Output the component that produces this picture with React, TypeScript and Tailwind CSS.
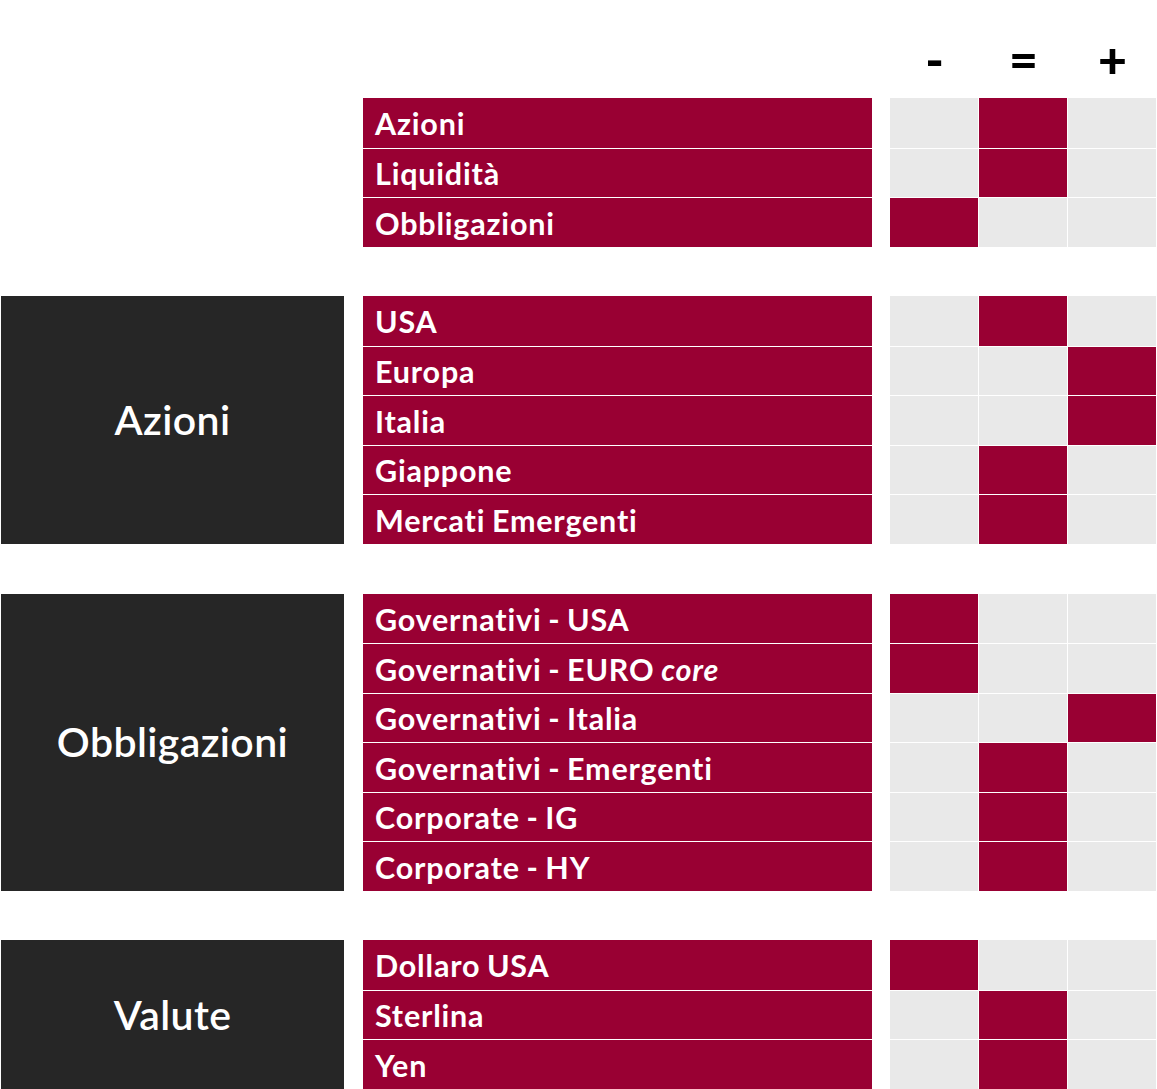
import React from 'react'

type Level = 0|1|2
type Row = {label:React.ReactNode;level:Level}
type Section = {title?:string;rows:Row[]}

const SECTIONS:Section[]=[
  {rows:[
    {label:'Azioni',level:1},
    {label:'Liquidità',level:1},
    {label:'Obbligazioni',level:0},
  ]},
  {title:'Azioni',rows:[
    {label:'USA',level:1},
    {label:'Europa',level:2},
    {label:'Italia',level:2},
    {label:'Giappone',level:1},
    {label:'Mercati Emergenti',level:1},
  ]},
  {title:'Obbligazioni',rows:[
    {label:'Governativi - USA',level:0},
    {label:<>Governativi - EURO <i>core</i></>,level:0},
    {label:'Governativi - Italia',level:2},
    {label:'Governativi - Emergenti',level:1},
    {label:'Corporate - IG',level:1},
    {label:'Corporate - HY',level:1},
  ]},
  {title:'Valute',rows:[
    {label:'Dollaro USA',level:0},
    {label:'Sterlina',level:1},
    {label:'Yen',level:1},
  ]},
]

function SectionBlock({s}:{s:Section}){
  return(
    <div className="flex">
      <div className="w-[344px] pl-px shrink-0">
        {s.title&&(
          <div className="h-full bg-[#262626] flex items-center justify-center text-white text-[41px] font-semibold tracking-[0.4px]">
            {s.title}
          </div>
        )}
      </div>
      <div className="w-[509px] ml-[19px] shrink-0 flex flex-col">
        {s.rows.map((r,i)=>(
          <div key={i} className={`h-[49.5px] bg-[#990033] text-white text-[30.5px] font-bold tracking-[0.8px] [word-spacing:-1.5px] flex items-center pl-3 ${i>0?'border-t border-white':''}`}>
            <span className="leading-none pt-[1px]">{r.label}</span>
          </div>
        ))}
      </div>
      <div className="ml-[18px] w-[266px] shrink-0 flex flex-col">
        {s.rows.map((r,i)=>(
          <div key={i} className={`h-[49.5px] flex gap-px ${i>0?'border-t border-white':''}`}>
            {[0,1,2].map(c=>(
              <div key={c} className={`w-[88px] ${c===r.level?'bg-[#990033]':'bg-[#e9e9e9]'}`}/>
            ))}
          </div>
        ))}
      </div>
    </div>
  )
}

export default function App(){
  return(
    <div className="w-[1157px] h-[1089px] bg-white overflow-hidden [font-variant-ligatures:none]" style={{fontFamily:'Lato, "Liberation Sans", sans-serif'}}>
      <div className="flex pt-[34px] h-[98px] pl-[890px]">
        {['-','=','+'].map(s=>(
          <div key={s} className="w-[89px] text-center text-[50px] font-black leading-none text-black">{s}</div>
        ))}
      </div>
      <div className="flex flex-col gap-[49.75px]">
        {SECTIONS.map((s,i)=><SectionBlock key={i} s={s}/>)}
      </div>
    </div>
  )
}
